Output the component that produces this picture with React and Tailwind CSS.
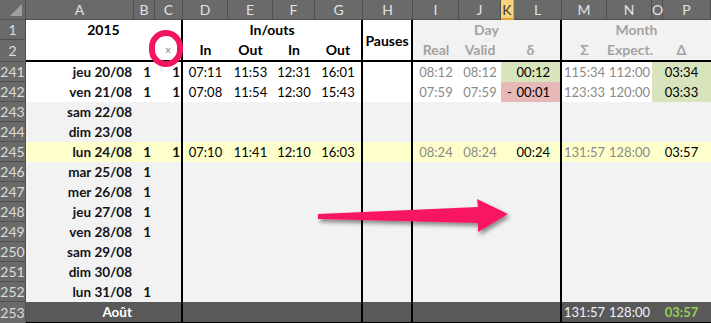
import React from "react";

const hdrCols = [
  ["A", "w-[108px]"], ["B", "w-[21px]"], ["C", "w-[28px]"], ["D", "w-[45px]"],
  ["E", "w-[45px]"], ["F", "w-[42px]"], ["G", "w-[48px]"], ["H", "w-[50px]"],
  ["I", "w-[46px]"], ["J", "w-[42px]"], ["K", "w-[13px]"], ["L", "w-[48px]"],
  ["M", "w-[45px]"], ["N", "w-[45px]"], ["O", "w-[11px]"], ["P", "w-[48px]"],
];

const rows = [
  { n: 241, bg: "bg-white", a: "jeu 20/08", b: "1", c: "1", t: ["07:11", "11:53", "12:31", "16:01"], i: "08:12", j: "08:12", kl: "00:12", klBg: "bg-[#d8e4bc]", m: "115:34", nn: "112:00", op: "03:34", opBg: "bg-[#d8e4bc]" },
  { n: 242, bg: "bg-white", a: "ven 21/08", b: "1", c: "1", t: ["07:08", "11:54", "12:30", "15:43"], i: "07:59", j: "07:59", kl: "00:01", neg: true, klBg: "bg-[#e6b8b7]", m: "123:33", nn: "120:00", op: "03:33", opBg: "bg-[#d8e4bc]" },
  { n: 243, bg: "bg-[#f2f2f2]", a: "sam 22/08" },
  { n: 244, bg: "bg-[#f2f2f2]", a: "dim 23/08" },
  { n: 245, bg: "bg-[#ffffcc]", a: "lun 24/08", b: "1", c: "1", t: ["07:10", "11:41", "12:10", "16:03"], i: "08:24", j: "08:24", kl: "00:24", m: "131:57", nn: "128:00", op: "03:57" },
  { n: 246, bg: "bg-[#f2f2f2]", a: "mar 25/08", b: "1" },
  { n: 247, bg: "bg-[#f2f2f2]", a: "mer 26/08", b: "1" },
  { n: 248, bg: "bg-[#f2f2f2]", a: "jeu 27/08", b: "1" },
  { n: 249, bg: "bg-[#f2f2f2]", a: "ven 28/08", b: "1" },
  { n: 250, bg: "bg-[#f2f2f2]", a: "sam 29/08" },
  { n: 251, bg: "bg-[#f2f2f2]", a: "dim 30/08" },
  { n: 252, bg: "bg-[#f2f2f2]", a: "lun 31/08", b: "1" },
];

function RowHead({ n, h = "h-[20px]" }) {
  return (
    <div className={`w-[26px] ${h} shrink-0 bg-[#6a6a6a] border-r border-b border-[#4f4f4f] text-[#dcdcdc] text-[14px] flex items-center justify-center`}>
      {n}
    </div>
  );
}

function Row({ r }) {
  const t = r.t || [];
  return (
    <div className={`flex h-[20px] leading-[20px] ${r.bg}`}>
      <RowHead n={r.n} />
      <div className="w-[108px] text-right pr-[2px] font-bold text-[13.5px] text-[#141414]">{r.a}</div>
      <div className="w-[21px] text-right pr-[4px] font-bold text-[13.5px] text-[#141414]">{r.b}</div>
      <div className="w-[28px] text-right pr-[1px] font-bold text-[13.5px] text-[#141414] border-r-2 border-black">{r.c}</div>
      <div className="w-[45px] text-center">{t[0]}</div>
      <div className="w-[45px] text-center">{t[1]}</div>
      <div className="w-[42px] text-center">{t[2]}</div>
      <div className="w-[48px] text-center border-r-2 border-black">{t[3]}</div>
      <div className="w-[50px] border-r-2 border-black"></div>
      <div className="w-[46px] text-center text-[#8a8a8a]">{r.i}</div>
      <div className="w-[42px] text-center text-[#8a8a8a]">{r.j}</div>
      <div className={`w-[61px] flex justify-between pl-[6px] pr-[10px] border-r-2 border-black ${r.klBg || ""}`}>
        <span>{r.neg ? "-" : ""}</span>
        <span>{r.kl}</span>
      </div>
      <div className="w-[45px] text-center text-[#8a8a8a]">{r.m}</div>
      <div className="w-[45px] text-center text-[#8a8a8a]">{r.nn}</div>
      <div className={`w-[59px] text-center ${r.opBg || ""}`}>{r.op}</div>
    </div>
  );
}

export default function App() {
  return (
    <div className="relative w-[711px] h-[323px] overflow-hidden bg-white text-[13px] text-black" style={{ fontFamily: "Lato, 'Open Sans', sans-serif" }}>
      {/* column header */}
      <div className="flex h-[20px] bg-[#6a6a6a] text-[#e2e2e2] text-[14px] leading-[19px]">
        <div className="w-[26px] h-[20px] border-r border-b border-[#4f4f4f] relative">
          <div className="absolute right-[3px] bottom-[3px] w-0 h-0 border-l-[12px] border-l-transparent border-b-[12px] border-b-[#a0a0a0]"></div>
        </div>
        {hdrCols.map(([l, w]) =>
          l === "K" ? (
            <div key={l} className={`${w} h-[20px] text-center bg-[#f8d47a] text-[#3a3a3a] border-r border-b-2 border-[#e2a23a]`}>{l}</div>
          ) : (
            <div key={l} className={`${w} h-[20px] text-center border-r border-b border-[#4f4f4f]`}>{l}</div>
          )
        )}
      </div>

      {/* rows 1-2 */}
      <div className="flex h-[42px] font-bold text-[14px]">
        <div className="flex flex-col font-normal">
          <RowHead n={1} />
          <RowHead n={2} h="h-[22px]" />
        </div>
        <div className="flex border-b-2 border-black">
          <div className="w-[157px] bg-white border-r-2 border-black flex flex-col">
            <div className="h-[20px] leading-[20px] text-center">2015</div>
            <div className="h-[20px] flex">
              <div className="w-[129px]"></div>
              <div className="w-[26px] text-center font-normal text-[10px] text-[#808080] leading-[18px]">x</div>
            </div>
          </div>
          <div className="w-[180px] bg-white border-r-2 border-black flex flex-col">
            <div className="h-[20px] leading-[20px] text-center">In/outs</div>
            <div className="h-[20px] leading-[20px] flex">
              <div className="w-[45px] text-center">In</div>
              <div className="w-[45px] text-center">Out</div>
              <div className="w-[42px] text-center">In</div>
              <div className="w-[46px] text-center">Out</div>
            </div>
          </div>
          <div className="w-[50px] bg-white border-r-2 border-black flex items-center justify-center">Pauses</div>
          <div className="w-[149px] bg-[#f2f2f2] border-r-2 border-black flex flex-col text-[#a3a3a3]">
            <div className="h-[20px] leading-[20px] text-center">Day</div>
            <div className="h-[20px] leading-[20px] flex">
              <div className="w-[46px] text-center">Real</div>
              <div className="w-[42px] text-center">Valid</div>
              <div className="w-[59px] text-center">δ</div>
            </div>
          </div>
          <div className="w-[149px] bg-[#f2f2f2] flex flex-col text-[#a3a3a3]">
            <div className="h-[20px] leading-[20px] text-center">Month</div>
            <div className="h-[20px] leading-[20px] flex">
              <div className="w-[45px] text-center">Σ</div>
              <div className="w-[45px] text-center">Expect.</div>
              <div className="w-[59px] text-center">Δ</div>
            </div>
          </div>
        </div>
      </div>

      {rows.map((r) => (
        <Row key={r.n} r={r} />
      ))}

      {/* footer row 253 */}
      <div className="flex h-[21px] leading-[20px] bg-[#595959]">
        <div className="w-[26px] h-[21px] bg-[#6a6a6a] border-r border-[#4f4f4f] text-[#dcdcdc] text-[14px] flex items-center justify-center">253</div>
        <div className="flex border-b border-black">
          <div className="w-[108px] text-right pr-[2px] font-bold text-[13.5px] text-white">Août</div>
          <div className="w-[21px]"></div>
          <div className="w-[28px] border-r-2 border-black"></div>
          <div className="w-[180px] border-r-2 border-black"></div>
          <div className="w-[50px] border-r-2 border-black"></div>
          <div className="w-[149px] border-r-2 border-black"></div>
          <div className="w-[45px] text-center text-[#eef2f8]">131:57</div>
          <div className="w-[45px] text-center text-[#eef2f8]">128:00</div>
          <div className="w-[59px] text-center text-[#92d050] font-bold">03:57</div>
        </div>
      </div>

      {/* red circle annotation */}
      <div className="absolute left-[149px] top-[30px] w-[34px] h-[37px] rounded-full border-[6px] border-[#f2165e] pointer-events-none"></div>

      {/* arrow annotation */}
      <svg className="absolute left-0 top-0 pointer-events-none" width="711" height="323" viewBox="0 0 711 323">
        <defs>
          <filter id="sh" x="-10%" y="-50%" width="130%" height="200%">
            <feDropShadow dx="2" dy="3" stdDeviation="2" floodColor="#000" floodOpacity="0.45" />
          </filter>
        </defs>
        <polygon
          points="318,214 478,207 477,199 508,214 478,232 478,223 318,219"
          fill="#f7185f"
          filter="url(#sh)"
        />
      </svg>
    </div>
  );
}
